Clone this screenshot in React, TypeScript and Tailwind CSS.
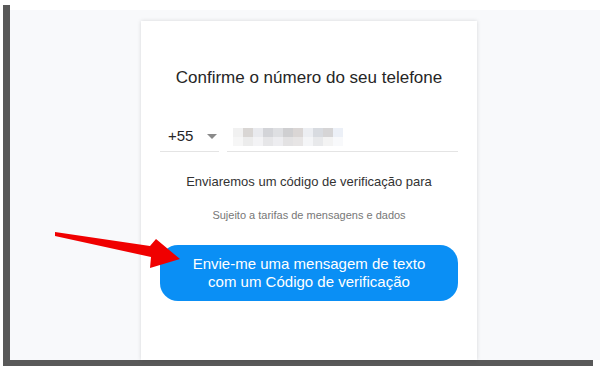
import React from "react";

// pixelated (blurred) phone number blocks, two rows
const BLUR_TOP = [
  "bg-[#f1f1f1]", "bg-[#d9d6d4]", "bg-[#e9eaee]", "bg-[#d3d4d8]", "bg-[#dedfe2]",
  "bg-[#cfcfd1]", "bg-[#dad6d5]", "bg-[#eceef2]", "bg-[#d8dbe0]", "bg-[#d6d5d6]", "bg-[#ecf0f7]",
];
const BLUR_BOTTOM = [
  "bg-[#f6f6f6]", "bg-[#ececec]", "bg-[#f3f3f5]", "bg-[#e6e6e8]", "bg-[#ededf0]",
  "bg-[#e3e2e3]", "bg-[#e7e5e5]", "bg-[#f4f5f7]", "bg-[#e8e9eb]", "bg-[#f3f3f3]", "bg-[#f8f9fb]",
];

function BlurredNumber() {
  return (
    <div className="flex flex-col">
      <div className="flex">
        {BLUR_TOP.map((c, i) => (
          <div key={i} className={`h-[9px] w-[10px] ${c}`} />
        ))}
      </div>
      <div className="flex">
        {BLUR_BOTTOM.map((c, i) => (
          <div key={i} className={`h-[9px] w-[10px] ${c}`} />
        ))}
      </div>
    </div>
  );
}

function RedArrow() {
  return (
    <svg
      className="absolute left-0 top-0 pointer-events-none"
      width="600"
      height="366"
      viewBox="0 0 600 366"
    >
      <polygon
        points="55,232 150,246 156,239 180,259 150,268 151,257 55,236"
        fill="#f00000"
      />
    </svg>
  );
}

export default function App() {
  return (
    <div
      className="relative w-[600px] h-[366px] overflow-hidden bg-white"
      style={{ fontFamily: '"Liberation Sans", Arial, sans-serif' }}
    >
      <div className="flex h-[360px]">
        <div className="w-[3px]" />
        <div className="mt-[5px] w-[7px] bg-[#595959]" />
        <div className="flex flex-1 flex-col pt-[10px]">
          <div className="flex-1 bg-[#f8f9fb] pl-[131px] pt-[11px]">
            <div className="flex h-full w-[336px] flex-col items-center bg-white px-[19px] pt-[47px] shadow-[0_0_4px_rgba(0,0,0,0.14)]">
              <h1 className="text-[17px] leading-[20px] text-[#262626]">
                Confirme o número do seu telefone
              </h1>

              <div className="mt-[34px] flex w-full gap-[8px]">
                <div className="flex h-[30px] w-[59px] items-center justify-between border-b border-[#e4e4e4] pl-[8px] pr-[2px]">
                  <span className="text-[15px] text-[#262626]">+55</span>
                  <svg width="10" height="6" viewBox="0 0 10 6">
                    <polygon points="0,0 10,0 5,5" fill="#8a8a8a" />
                  </svg>
                </div>
                <div className="flex h-[30px] flex-1 items-center border-b border-[#e4e4e4] pl-[6px]">
                  <BlurredNumber />
                </div>
              </div>

              <p className="mt-[22px] text-[13px] leading-[16px] text-[#333333]">
                Enviaremos um código de verificação para
              </p>
              <p className="mt-[18px] text-[11px] leading-[14px] text-[#777777]">
                Sujeito a tarifas de mensagens e dados
              </p>

              <button className="mt-[23px] flex h-[56px] w-full flex-col items-center justify-center rounded-[18px] bg-[#0a8ff5] text-[15px] leading-[18px] text-white">
                <span>Envie-me uma mensagem de texto</span>
                <span>com um Código de verificação</span>
              </button>
            </div>
          </div>
        </div>
      </div>
      <div className="ml-[3px] h-[6px] w-[590px] bg-[#595959]" />
      <RedArrow />
    </div>
  );
}
